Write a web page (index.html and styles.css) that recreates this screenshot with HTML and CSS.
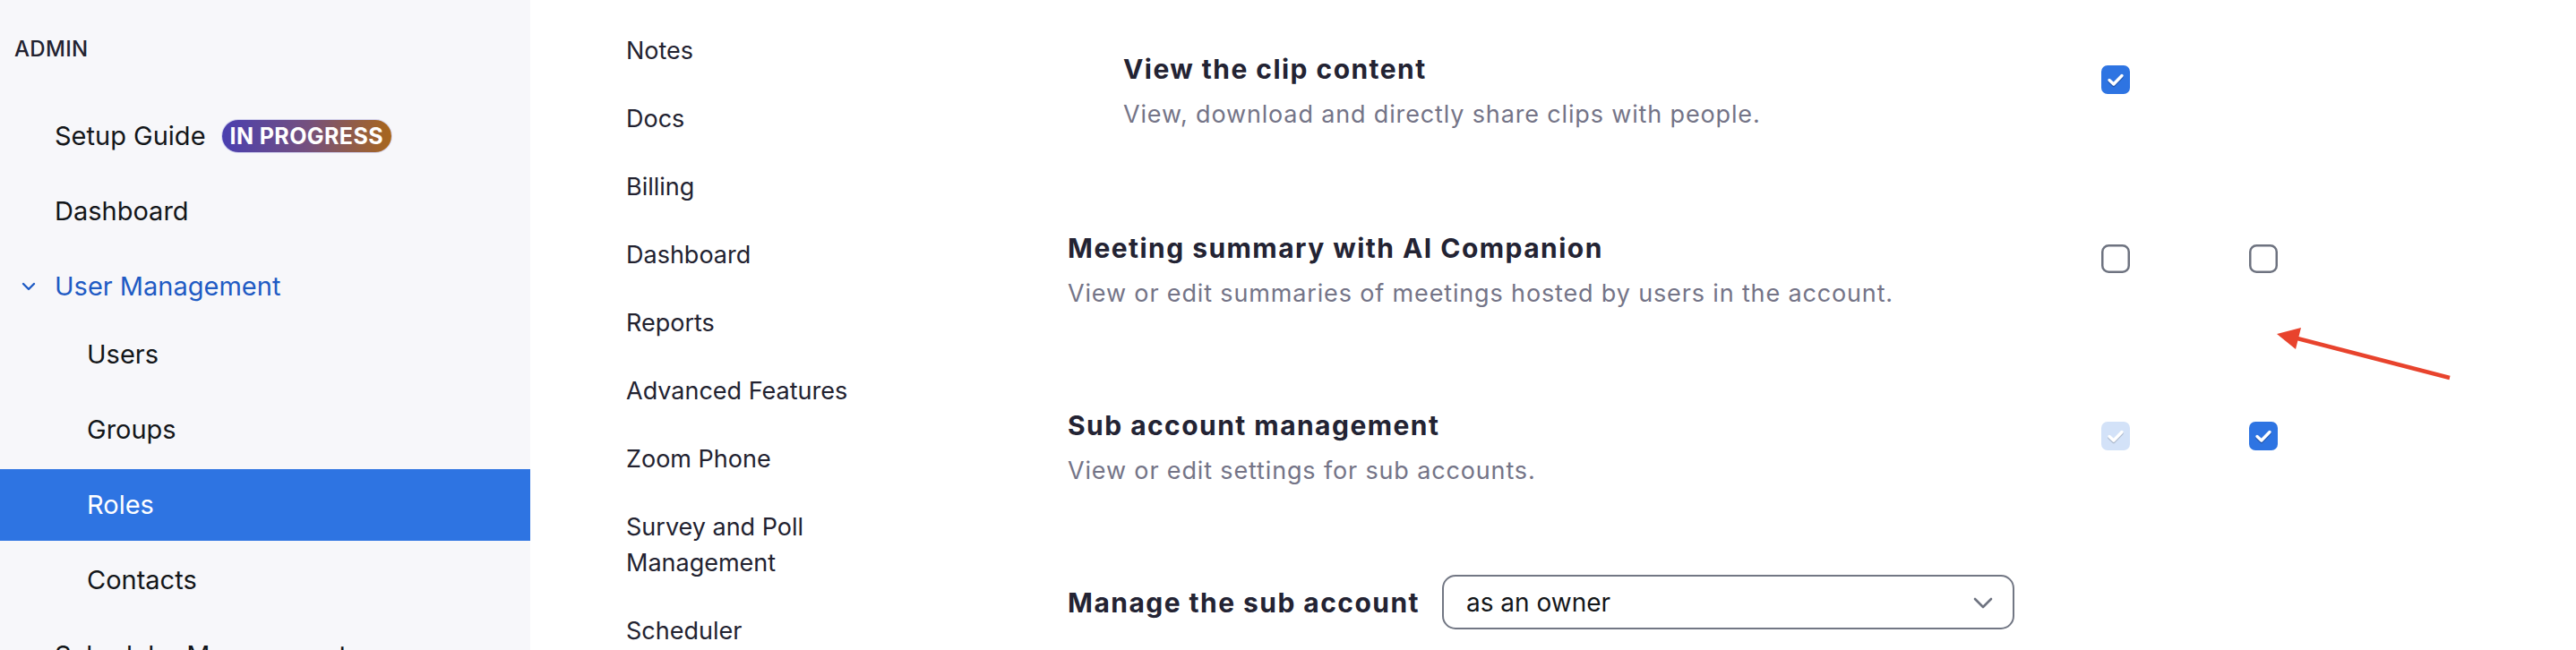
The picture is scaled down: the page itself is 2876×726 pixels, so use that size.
FILE: index.html
```html
<!DOCTYPE html>
<html lang="en">
<head>
<meta charset="utf-8">
<title>Roles</title>
<link rel="stylesheet" href="styles.css">
</head>
<body>
<div class="page">
  <aside class="sidebar">
    <div class="side-title">ADMIN</div>
    <div class="nav-item top">
      <span>Setup Guide</span>
      <span class="badge">IN PROGRESS</span>
    </div>
    <div class="nav-item top"><span>Dashboard</span></div>
    <div class="nav-item top group open">
      <svg class="chev" width="16" height="12" viewBox="0 0 16 12"><path d="M2 3 L8 9 L14 3" fill="none" stroke="#1f5bc4" stroke-width="2.4" stroke-linecap="round" stroke-linejoin="round"/></svg>
      <span>User Management</span>
    </div>
    <div class="nav-item sub"><span>Users</span></div>
    <div class="nav-item sub"><span>Groups</span></div>
    <div class="nav-item sub active"><span>Roles</span></div>
    <div class="nav-item sub"><span>Contacts</span></div>
    <div class="nav-item top"><span>Scheduler Management</span></div>
  </aside>

  <nav class="cats">
    <div class="cat">Notes</div>
    <div class="cat">Docs</div>
    <div class="cat">Billing</div>
    <div class="cat">Dashboard</div>
    <div class="cat">Reports</div>
    <div class="cat">Advanced Features</div>
    <div class="cat">Zoom Phone</div>
    <div class="cat">Survey and Poll Management</div>
    <div class="cat">Scheduler</div>
  </nav>

  <main class="perms">
    <div class="perm r1 indent">
      <div class="perm-text">
        <div class="perm-title">View the clip content</div>
        <div class="perm-desc">View, download and directly share clips with people.</div>
      </div>
      <div class="cb-cell">
        <svg class="cb" width="32" height="32" viewBox="0 0 32 32"><rect x="0" y="0" width="32" height="32" rx="7" fill="#2e74e2"/><path d="M9 16.5 L13.8 21 L23 11.5" fill="none" stroke="#1a3f86" stroke-opacity="0.55" stroke-width="3.6" stroke-linecap="round" stroke-linejoin="round" transform="translate(0 1.4)"/><path d="M9 16.5 L13.8 21 L23 11.5" fill="none" stroke="#fff" stroke-width="3.4" stroke-linecap="round" stroke-linejoin="round"/></svg>
      </div>
    </div>

    <div class="perm r2">
      <div class="perm-text">
        <div class="perm-title">Meeting summary with AI Companion</div>
        <div class="perm-desc">View or edit summaries of meetings hosted by users in the account.</div>
      </div>
      <div class="cb-cell">
        <svg class="cb" width="32" height="32" viewBox="0 0 32 32"><rect x="1.25" y="1.25" width="29.5" height="29.5" rx="7" fill="#fff" stroke="#6e7380" stroke-width="2.5"/></svg>
      </div>
      <div class="cb-cell">
        <svg class="cb" width="32" height="32" viewBox="0 0 32 32"><rect x="1.25" y="1.25" width="29.5" height="29.5" rx="7" fill="#fff" stroke="#6e7380" stroke-width="2.5"/></svg>
      </div>
    </div>

    <div class="perm r3">
      <div class="perm-text">
        <div class="perm-title">Sub account management</div>
        <div class="perm-desc">View or edit settings for sub accounts.</div>
      </div>
      <div class="cb-cell">
        <svg class="cb" width="32" height="32" viewBox="0 0 32 32"><rect x="0" y="0" width="32" height="32" rx="7" fill="#d3e2f8"/><path d="M9 16.5 L13.8 21 L23 11.5" fill="none" stroke="#8a93a6" stroke-opacity="0.5" stroke-width="3.6" stroke-linecap="round" stroke-linejoin="round" transform="translate(0 1.4)"/><path d="M9 16.5 L13.8 21 L23 11.5" fill="none" stroke="#fff" stroke-width="3.4" stroke-linecap="round" stroke-linejoin="round"/></svg>
      </div>
      <div class="cb-cell">
        <svg class="cb" width="32" height="32" viewBox="0 0 32 32"><rect x="0" y="0" width="32" height="32" rx="7" fill="#2e74e2"/><path d="M9 16.5 L13.8 21 L23 11.5" fill="none" stroke="#1a3f86" stroke-opacity="0.55" stroke-width="3.6" stroke-linecap="round" stroke-linejoin="round" transform="translate(0 1.4)"/><path d="M9 16.5 L13.8 21 L23 11.5" fill="none" stroke="#fff" stroke-width="3.4" stroke-linecap="round" stroke-linejoin="round"/></svg>
      </div>
    </div>

    <div class="manage">
      <span class="manage-label">Manage the sub account</span>
      <div class="select">
        <span>as an owner</span>
        <svg class="sel-chev" width="22" height="14" viewBox="0 0 22 14"><path d="M2 2 L11 11 L20 2" fill="none" stroke="#6e7380" stroke-width="2.6" stroke-linecap="round" stroke-linejoin="round"/></svg>
      </div>
    </div>

    <svg class="annot" width="220" height="70" viewBox="0 0 220 70">
      <line x1="210" y1="62" x2="40" y2="18" stroke="#e8432d" stroke-width="4.5"/>
      <polygon points="17,13 44,6 38,30" fill="#e8432d"/>
    </svg>
  </main>
</div>
</body>
</html>
```

FILE: styles.css
```css
* { box-sizing: border-box; }
html, body { margin: 0; padding: 0; background: #fff; }
body {
  font-family: Inter, "Noto Sans", "Liberation Sans", sans-serif;
  color: #131619;
  overflow: hidden;
}
.page {
  display: flex;
  height: 726px;
  width: 2876px;
  overflow: hidden;
}

/* Sidebar */
.sidebar {
  flex: 0 0 592px;
  width: 592px;
  background: #f7f7fa;
  height: 726px;
  overflow: hidden;
}
.side-title {
  font-size: 24px;
  font-weight: 500;
  color: #222230;
  letter-spacing: 0.3px;
  padding: 35px 0 0 16px;
  line-height: 40px;
  height: 112px;
}
.nav-item {
  height: 80px;
  margin-bottom: 4px;
  display: flex;
  align-items: center;
  font-size: 29px;
  line-height: 40px;
  color: #131619;
  white-space: nowrap;
  position: relative;
}
.nav-item.top { padding-left: 61px; }
.nav-item.sub { padding-left: 97px; }
.nav-item.group { color: #1f5bc4; margin-bottom: -4px; }
.nav-item.active { background: #2e74e2; color: #fff; }
.chev {
  position: absolute;
  left: 24px;
  top: 34px;
}
.badge {
  margin-left: 18px;
  height: 36px;
  padding: 0 9px;
  border-radius: 18px;
  background: linear-gradient(90deg, #4a3fb0 0%, #74507f 50%, #a8661c 100%);
  color: #fff;
  font-size: 25px;
  font-weight: 700;
  line-height: 36px;
  letter-spacing: 0.4px;
  display: inline-flex;
  align-items: center;
  box-shadow: 0 0 0 1px rgba(170, 170, 230, 0.45);
}

/* Categories column */
.cats {
  flex: 0 0 600px;
  padding: 19px 0 0 107px;
}
.cat {
  width: 320px;
  padding: 18px 0;
  font-size: 27px;
  line-height: 40px;
  color: #222230;
}

/* Permissions */
.perms {
  flex: 1 1 auto;
  position: relative;
  padding-top: 57px;
}
.perm {
  display: flex;
  align-items: flex-start;
}
.perm.r1 { margin-bottom: 109px; }
.perm.r2 { margin-bottom: 107px; }
.perm.r3 { margin-bottom: 96px; }
.perm-text { flex: 0 0 1154px; }
.perm.indent { padding-left: 62px; }
.perm.indent .perm-text { flex-basis: 1092px; }
.perm-title {
  font-size: 30px;
  font-weight: 700;
  line-height: 40px;
  letter-spacing: 1.45px;
  color: #232333;
}
.perm-desc {
  margin-top: 11px;
  font-size: 27px;
  line-height: 40px;
  letter-spacing: 0.85px;
  color: #747487;
}
.cb-cell {
  flex: 0 0 165px;
  padding-top: 16px;
}
.cb { display: block; }

.manage {
  display: flex;
  align-items: center;
}
.manage-label {
  font-size: 30px;
  font-weight: 700;
  letter-spacing: 1.45px;
  color: #232333;
  line-height: 40px;
  margin-right: 25px;
}
.select {
  width: 639px;
  height: 61px;
  border: 2px solid #727784;
  border-radius: 15px;
  display: flex;
  align-items: center;
  justify-content: space-between;
  padding: 0 22px 0 25px;
  font-size: 28px;
  color: #131619;
}
.sel-chev { margin-top: 2px; }

.annot {
  position: absolute;
  left: 1333px;
  top: 360px;
}
```
